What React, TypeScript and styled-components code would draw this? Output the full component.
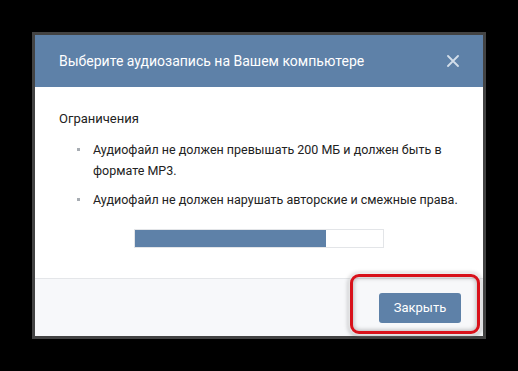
import { createGlobalStyle } from 'styled-components';
import styled from 'styled-components';

const GlobalStyle = createGlobalStyle`
  html, body {
    margin: 0;
    padding: 0;
    background: #000;
  }
  body {
    font-family: Roboto, "Liberation Sans", Arial, sans-serif;
  }
`;

const rules = [
  'Аудиофайл не должен превышать 200 МБ и должен быть в формате MP3.',
  'Аудиофайл не должен нарушать авторские и смежные права.',
];

export default function App() {
  return (
    <>
      <GlobalStyle />
      <Page>
        <Dialog>
          <Header>
            <Title>Выберите аудиозапись на Вашем компьютере</Title>
            <CloseButton aria-label="Закрыть">
              <svg width="12" height="12" viewBox="0 0 12 12">
                <path
                  d="M1 1 L11 11 M11 1 L1 11"
                  stroke="#d3deea"
                  strokeWidth="1.8"
                  strokeLinecap="round"
                />
              </svg>
            </CloseButton>
          </Header>

          <Body>
            <Subtitle>Ограничения</Subtitle>
            <RuleList>
              {rules.map((rule) => (
                <RuleItem key={rule}>{rule}</RuleItem>
              ))}
            </RuleList>
            <Progress>
              <ProgressFill style={{ width: '77%' }} />
            </Progress>
          </Body>

          <Footer>
            <PrimaryButton>Закрыть</PrimaryButton>
            {/* красная рамка-выделение поверх кнопки */}
            <Highlight />
          </Footer>
        </Dialog>
      </Page>
    </>
  );
}

const Page = styled.div`
  width: 518px;
  height: 371px;
  box-sizing: border-box;
  padding: 32px 0 0 32px;
  background: #000;
`;

const Dialog = styled.div`
  width: 448px;
  border: 3px solid #434343;
  background: #fff;
  display: flex;
  flex-direction: column;
`;

const Header = styled.div`
  height: 52px;
  background: #5e81a8;
  display: flex;
  align-items: center;
  justify-content: space-between;
  padding: 0 23px 0 24px;
`;

const Title = styled.span`
  color: #fff;
  font-size: 14px;
`;

const CloseButton = styled.button`
  background: transparent;
  border: none;
  padding: 0;
  width: 14px;
  height: 14px;
  display: flex;
  align-items: center;
  justify-content: center;
  cursor: pointer;
`;

const Body = styled.div`
  padding: 22px 20px 30px 24px;
  display: flex;
  flex-direction: column;
`;

const Subtitle = styled.div`
  font-size: 13px;
  color: #222;
  line-height: 20px;
`;

const RuleList = styled.ul`
  list-style: none;
  margin: 10px 0 0;
  padding: 0 0 0 34px;
  display: flex;
  flex-direction: column;
  gap: 8px;
`;

const RuleItem = styled.li`
  position: relative;
  font-size: 12.5px;
  line-height: 21px;
  color: #222;

  &::before {
    content: '';
    position: absolute;
    left: -16px;
    top: 9px;
    width: 3px;
    height: 3px;
    background: #a8adb3;
  }
`;

const Progress = styled.div`
  align-self: center;
  margin: 19px 0 0 -4px;
  width: 248px;
  height: 17px;
  border: 1px solid #e3e5e8;
  background: #fff;
`;

const ProgressFill = styled.div`
  height: 100%;
  background: #5e81a8;
`;

const Footer = styled.div`
  position: relative;
  height: 58px;
  box-sizing: border-box;
  background: #f7f8fa;
  border-top: 1px solid #e4e6e9;
  display: flex;
  align-items: center;
  justify-content: flex-end;
  padding: 0 22px 0 0;
`;

const PrimaryButton = styled.button`
  width: 82px;
  height: 30px;
  border: none;
  border-radius: 3px;
  background: #5e81a8;
  color: #fff;
  font-family: Roboto, "Liberation Sans", Arial, sans-serif;
  font-size: 13px;
  cursor: pointer;
`;

const Highlight = styled.div`
  position: absolute;
  left: 315px;
  top: -5px;
  width: 124px;
  height: 54px;
  border: 3px solid #d8121b;
  border-radius: 9px;
  box-shadow: 0 0 3px 1px rgba(255, 255, 255, 0.8),
    0 1px 4px 2px rgba(0, 0, 0, 0.25),
    inset 0 0 4px 1px rgba(0, 0, 0, 0.25);
  pointer-events: none;
`;
